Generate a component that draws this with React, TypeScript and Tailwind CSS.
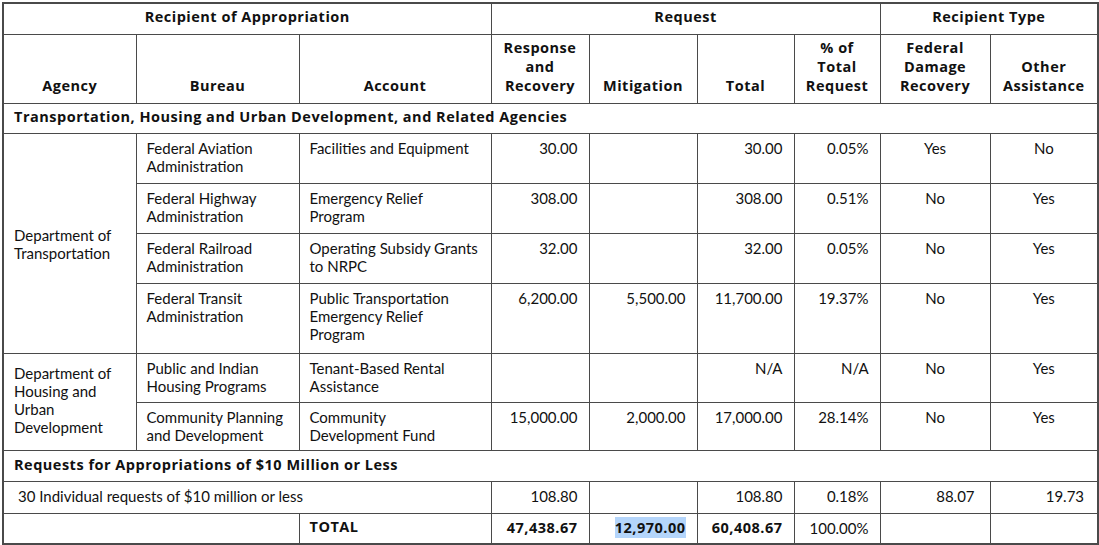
const bold = "font-['Open_Sans','Lato',sans-serif] font-bold text-[14.5px] tracking-[0.5px]";
const cell = "border border-[#4a4a4a] px-[10px] align-top";
const num = `${cell} text-right pr-[11px] pt-[5px]`;
const ctr = `${cell} text-center pt-[5px]`;
const txt = `${cell} text-left pt-[5px]`;
const head = `border border-[#4a4a4a] ${bold} leading-[19px] text-center align-bottom pb-[8px] px-1`;
const mid = "align-middle pt-0 pb-[3px]";

type Row = {
  bureau: string[];
  account: string[];
  rr: string;
  mit: string;
  total: string;
  pct: string;
  fed: string;
  other: string;
  h: string;
};

const dot: Row[] = [
  { bureau: ["Federal Aviation", "Administration"], account: ["Facilities and Equipment"], rr: "30.00", mit: "", total: "30.00", pct: "0.05%", fed: "Yes", other: "No", h: "h-[50px]" },
  { bureau: ["Federal Highway", "Administration"], account: ["Emergency Relief", "Program"], rr: "308.00", mit: "", total: "308.00", pct: "0.51%", fed: "No", other: "Yes", h: "h-[50px]" },
  { bureau: ["Federal Railroad", "Administration"], account: ["Operating Subsidy Grants", "to NRPC"], rr: "32.00", mit: "", total: "32.00", pct: "0.05%", fed: "No", other: "Yes", h: "h-[50px]" },
  { bureau: ["Federal Transit", "Administration"], account: ["Public Transportation", "Emergency Relief", "Program"], rr: "6,200.00", mit: "5,500.00", total: "11,700.00", pct: "19.37%", fed: "No", other: "Yes", h: "h-[70px]" },
];

const hud: Row[] = [
  { bureau: ["Public and Indian", "Housing Programs"], account: ["Tenant-Based Rental", "Assistance"], rr: "", mit: "", total: "N/A", pct: "N/A", fed: "No", other: "Yes", h: "h-[49px]" },
  { bureau: ["Community Planning", "and Development"], account: ["Community", "Development Fund"], rr: "15,000.00", mit: "2,000.00", total: "17,000.00", pct: "28.14%", fed: "No", other: "Yes", h: "h-[48px]" },
];

function Lines({ items }: { items: string[] }) {
  return (
    <>
      {items.map((t, i) => (
        <div key={i}>{t}</div>
      ))}
    </>
  );
}

function DataCells({ r }: { r: Row }) {
  return (
    <>
      <td className={txt}>
        <Lines items={r.bureau} />
      </td>
      <td className={txt}>
        <Lines items={r.account} />
      </td>
      <td className={num}>{r.rr}</td>
      <td className={num}>{r.mit}</td>
      <td className={num}>{r.total}</td>
      <td className={`${num} pr-[8px]`}>{r.pct}</td>
      <td className={ctr}>{r.fed}</td>
      <td className={ctr}>{r.other}</td>
    </>
  );
}

export default function App() {
  return (
    <div className="w-[1099px] h-[545px] bg-white pt-[2px] pl-[2px] text-[#111] font-['Lato','Open_Sans',sans-serif] text-[15px] leading-[18px]">
      <table className="table-fixed border-collapse w-[1095px] border-2 border-[#4a4a4a]">
        <colgroup>
          <col className="w-[133px]" />
          <col className="w-[163px]" />
          <col className="w-[192px]" />
          <col className="w-[98px]" />
          <col className="w-[108px]" />
          <col className="w-[97px]" />
          <col className="w-[86px]" />
          <col className="w-[110px]" />
          <col className="w-[108px]" />
        </colgroup>
        <thead>
          <tr className="h-[31px]">
            <th colSpan={3} className={`${head} align-middle pb-0 pt-[3px]`}>Recipient of Appropriation</th>
            <th colSpan={4} className={`${head} align-middle pb-0 pt-[3px]`}>Request</th>
            <th colSpan={2} className={`${head} align-middle pb-0 pt-[3px]`}>Recipient Type</th>
          </tr>
          <tr className="h-[69px]">
            <th className={head}>Agency</th>
            <th className={head}>Bureau</th>
            <th className={head}>Account</th>
            <th className={head}>
              Response
              <br />
              and
              <br />
              Recovery
            </th>
            <th className={head}>Mitigation</th>
            <th className={head}>Total</th>
            <th className={head}>
              % of
              <br />
              Total
              <br />
              Request
            </th>
            <th className={head}>
              Federal
              <br />
              Damage
              <br />
              Recovery
            </th>
            <th className={head}>
              Other
              <br />
              Assistance
            </th>
          </tr>
        </thead>
        <tbody>
          <tr className="h-[30px]">
            <td colSpan={9} className={`border border-[#4a4a4a] px-[10px] ${bold} ${mid}`}>
              Transportation, Housing and Urban Development, and Related Agencies
            </td>
          </tr>
          {dot.map((r, i) => (
            <tr key={i} className={r.h}>
              {i === 0 && (
                <td rowSpan={4} className="border border-[#4a4a4a] px-[10px] align-middle">
                  Department of
                  <br />
                  Transportation
                </td>
              )}
              <DataCells r={r} />
            </tr>
          ))}
          {hud.map((r, i) => (
            <tr key={i} className={r.h}>
              {i === 0 && (
                <td rowSpan={2} className="border border-[#4a4a4a] px-[10px] align-middle pb-[4px]">
                  Department of
                  <br />
                  Housing and
                  <br />
                  Urban
                  <br />
                  Development
                </td>
              )}
              <DataCells r={r} />
            </tr>
          ))}
          <tr className="h-[31px]">
            <td colSpan={9} className={`border border-[#4a4a4a] px-[10px] ${bold} ${mid}`}>
              Requests for Appropriations of $10 Million or Less
            </td>
          </tr>
          <tr className="h-[32px]">
            <td colSpan={3} className={`border border-[#4a4a4a] pl-[14px] ${mid}`}>
              30 Individual requests of $10 million or less
            </td>
            <td className={`${num} ${mid}`}>108.80</td>
            <td className={num}></td>
            <td className={`${num} ${mid}`}>108.80</td>
            <td className={`${num} pr-[8px] ${mid}`}>0.18%</td>
            <td className={`${num} pr-[15px] ${mid}`}>88.07</td>
            <td className={`${num} pr-[13px] ${mid}`}>19.73</td>
          </tr>
          <tr className="h-[30px]">
            <td colSpan={2} className="border border-[#4a4a4a]"></td>
            <td className={`border border-[#4a4a4a] px-[10px] ${bold} ${mid}`}>TOTAL</td>
            <td className={`${num} ${bold} ${mid}`}>47,438.67</td>
            <td className={`${num} ${bold} ${mid}`}>
              <span className="bg-[#b4d5fb] py-[1px]">12,970.00</span>
            </td>
            <td className={`${num} ${bold} ${mid}`}>60,408.67</td>
            <td className={`${num} pr-[8px] ${mid}`}>100.00%</td>
            <td className="border border-[#4a4a4a]"></td>
            <td className="border border-[#4a4a4a]"></td>
          </tr>
        </tbody>
      </table>
    </div>
  );
}
